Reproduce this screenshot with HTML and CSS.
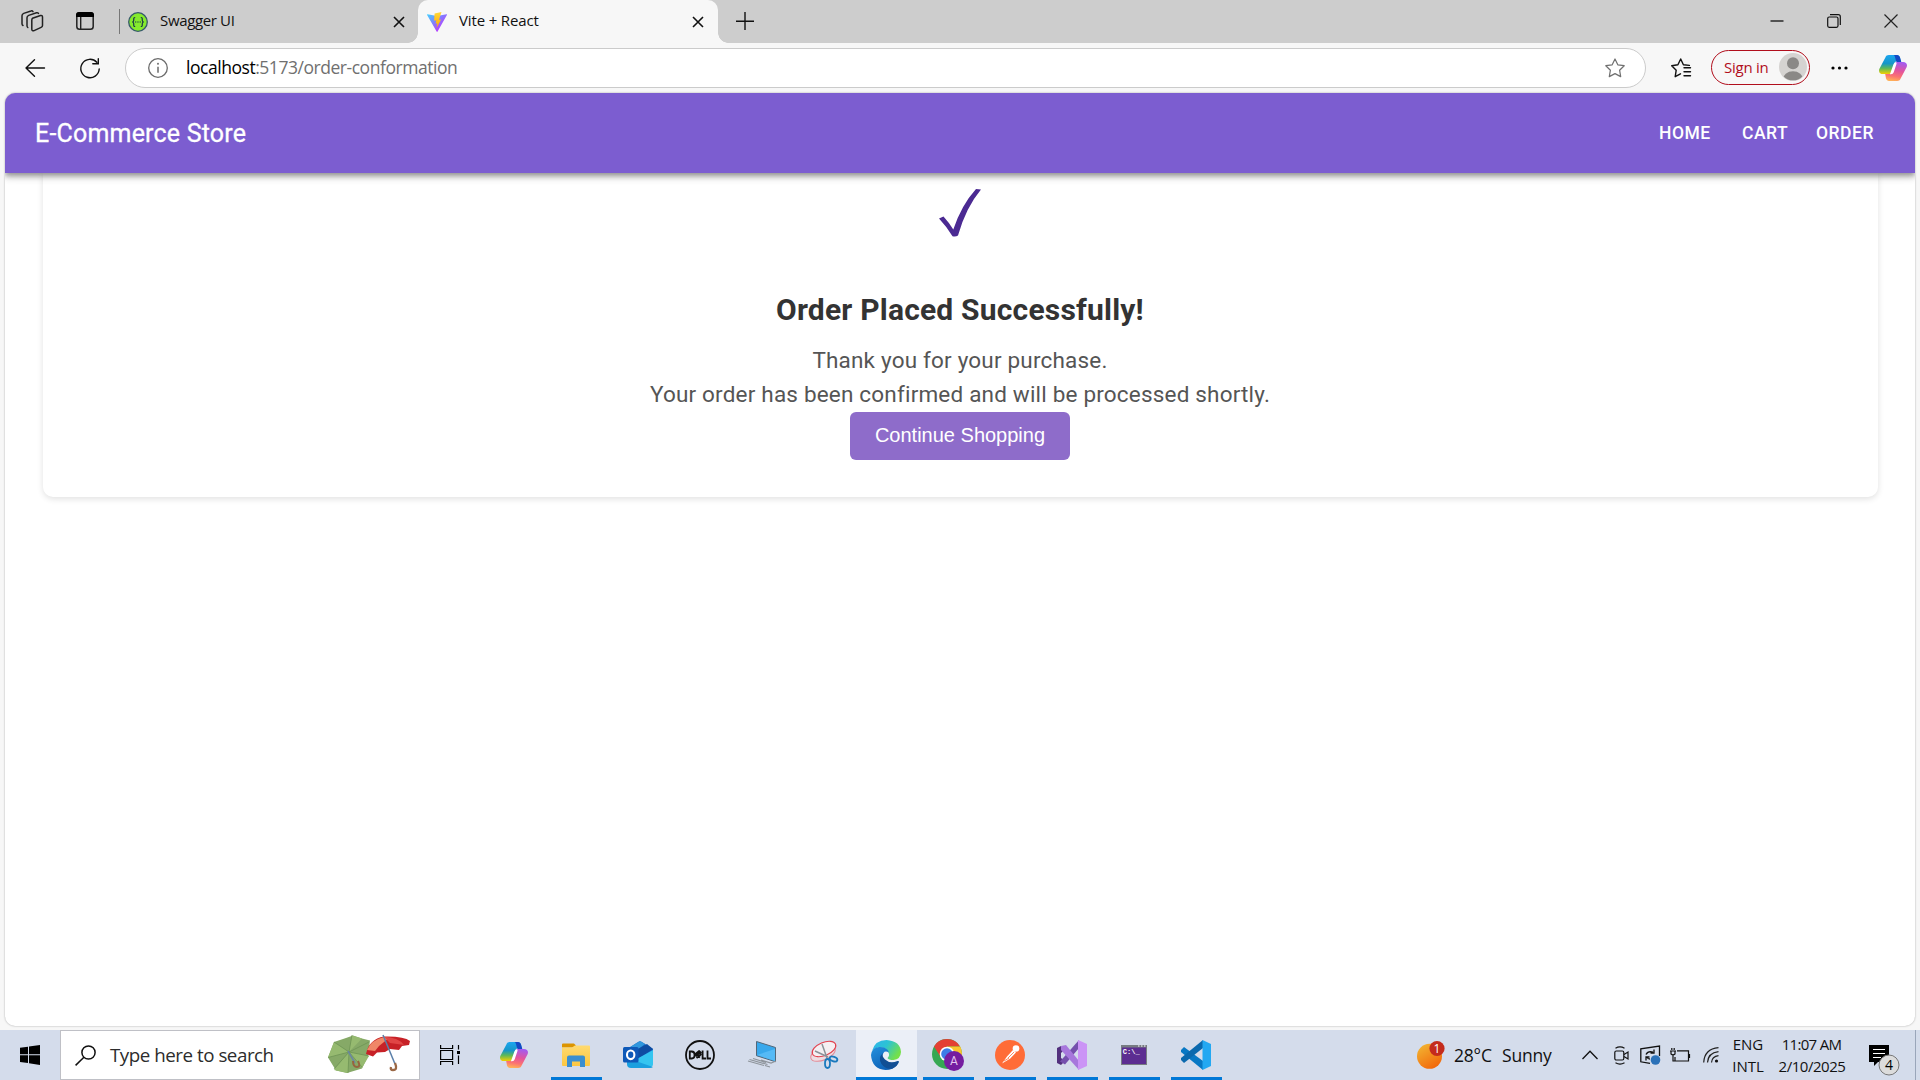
FILE: index.html
```html
<!DOCTYPE html>
<html lang="en">
<head>
<meta charset="utf-8">
<title>Vite + React</title>
<link rel="stylesheet" href="styles.css">
</head>
<body>
<svg class="defs" width="0" height="0">
  <defs>
    <linearGradient id="cpA" x1="0" y1="0" x2="0" y2="1"><stop offset="0" stop-color="#1ba6f0"/><stop offset=".45" stop-color="#1696c8"/><stop offset=".7" stop-color="#5cb85a"/><stop offset="1" stop-color="#f4d000"/></linearGradient>
    <linearGradient id="cpB" x1=".6" y1="0" x2=".4" y2="1"><stop offset="0" stop-color="#a35bf0"/><stop offset=".45" stop-color="#e3549d"/><stop offset=".75" stop-color="#fb7272"/><stop offset="1" stop-color="#ffb057"/></linearGradient>
    <linearGradient id="viteA" x1="0" y1="0" x2="1" y2="1"><stop offset="0" stop-color="#41d1ff"/><stop offset=".8" stop-color="#bd34fe"/></linearGradient>
    <linearGradient id="viteB" x1="0" y1="0" x2="0" y2="1"><stop offset="0" stop-color="#ffd83a"/><stop offset="1" stop-color="#ffa800"/></linearGradient>
    <linearGradient id="edgeA" x1="0" y1="0" x2="1" y2=".5"><stop offset="0" stop-color="#2fb3ee"/><stop offset=".5" stop-color="#2cc3d4"/><stop offset="1" stop-color="#74e04a"/></linearGradient>
    <linearGradient id="edgeB" x1="0" y1="0" x2=".6" y2="1"><stop offset="0" stop-color="#2390dd"/><stop offset="1" stop-color="#0c5fb5"/></linearGradient>
    <linearGradient id="sun" x1="0" y1="0" x2=".6" y2="1"><stop offset="0" stop-color="#f2bb35"/><stop offset="1" stop-color="#f26a0c"/></linearGradient>
    <linearGradient id="folder" x1="0" y1="0" x2="0" y2="1"><stop offset="0" stop-color="#ffda70"/><stop offset="1" stop-color="#fbc741"/></linearGradient>
    <symbol id="copilot" viewBox="0 0 28 26">
      <path d="M6.500 2.200C7 .7 8.200 0 9.800 0H18c1.500 0 2.500 1 3 2.500L21.800 6h-3c-2 0-3 1-3.500 2.600L12.500 17c-.5 1.400-1.500 2-3 2H4c-3 0-4.700-2-3.700-5z" fill="url(#cpA)"/>
      <path d="M14.500 0H18c1.500 0 2.500 1 3 2.500L22.300 7H18c-1.500 0-1.600-7-3.500-7z" fill="#1549c4"/>
      <path d="M21.500 23.800c-.5 1.500-1.700 2.200-3.300 2.200H10c-1.500 0-2.500-1-3-2.500L6.200 19h3.300c1.500 0 2.500-.6 3-2l3-8.500C16 7.500 17 7 18.500 7H24c3 0 4.700 2 3.700 5z" fill="url(#cpB)"/>
      <path d="M12.700 16.500l2.500-7C15.600 8.400 16.400 8 17.300 8h-.3l-3 9c-.3.900-1 1.500-2 1.500z" fill="#fff" stroke="#fff" stroke-width="1.500"/>
    </symbol>
    <symbol id="close" viewBox="0 0 12 12"><path d="M1 1l10 10M11 1L1 11" fill="none" stroke="#111" stroke-width="1.600"/></symbol>
  </defs>
</svg>

<header class="tabstrip">
  <svg class="ic-workspaces" width="23" height="23" viewBox="0 0 23 23" fill="none" stroke="#222" stroke-width="1.500" stroke-linejoin="round" stroke-linecap="round">
    <path d="M11.500 8.200l8-2.700c1-.3 2 .2 2 1.400v8.500c0 1-.5 1.600-1.400 2l-7 3.200c-1.200.5-2.300 0-2.300-1.300v-9c0-1 .3-1.700.7-2.100z"/>
    <path d="M6.800 17.500c-.6-.4-.8-1-.8-1.700V7.800c0-1.200.6-2 1.700-2.400L15.500 2.800c.9-.3 1.600 0 2 .6M2 15.500c-.7-.4-1-1-1-1.800V5.800c0-1.200.6-2 1.700-2.400L10 1c.8-.3 1.600 0 2 .6"/>
  </svg>
  <svg class="ic-tabs" width="18" height="18" viewBox="0 0 18 18"><rect x=".8" y=".8" width="16.400" height="16.400" rx="2.800" fill="none" stroke="#222" stroke-width="1.500"/><path d="M0 5V3Q0 0 3 0h12q3 0 3 3v2z"/><path d="M4.700 5v12" stroke="#222" stroke-width="1.400"/></svg>
  <div class="strip-divider"></div>
  <div class="tab tab-idle">
    <svg width="20" height="20" viewBox="0 0 20 20"><circle cx="10" cy="10" r="9.300" fill="#85ea2d" stroke="#35596b" stroke-width="1.300"/><path d="M7.200 5.500c-2 0-1.300 1.500-1.500 3C5.600 9.500 5 10 4.200 10c.8 0 1.400.5 1.500 1.500.2 1.500-.5 3 1.500 3M12.800 5.500c2 0 1.300 1.500 1.500 3 .1 1 .7 1.500 1.500 1.500-.8 0-1.400.5-1.500 1.500-.2 1.500.5 3-1.500 3" fill="none" stroke="#173647" stroke-width="1.200"/><path d="M7 10h1.300m1 0h1.300m1 0H13" stroke="#173647" stroke-width="1.200"/></svg>
    <span class="tab-title t-swagger">Swagger UI</span>
    <svg class="tab-close" width="12" height="12"><use href="#close"/></svg>
  </div>
  <div class="tab tab-active">
    <svg width="20" height="20" viewBox="0 0 20 20"><path d="M.5 2.300L10 4l9.500-1.700c.5 0 .7.300.4.800L10.600 19.500c-.3.500-.8.500-1 0L.1 3c-.2-.4 0-.7.400-.7z" fill="url(#viteA)"/><path d="M14.500.1L7.600 1.500l-.5 7.300 2.200-.5-.7 3.500 1.700-.5-.9 5 4.700-8.800-2.200.4L14.500.1z" fill="url(#viteB)"/></svg>
    <span class="tab-title t-vite">Vite + React</span>
    <svg class="tab-close" width="12" height="12"><use href="#close"/></svg>
  </div>
  <svg class="ic-plus" width="18" height="18"><path d="M9 0v18M0 9.200h18" stroke="#111" stroke-width="1.400"/></svg>
  <div class="window-buttons">
    <svg width="14" height="14"><path d="M.5 7h13" stroke="#000" stroke-width="1.200"/></svg>
    <svg width="14" height="14" fill="none" stroke="#111" stroke-width="1.200"><rect x=".7" y="3" width="10.300" height="10.300" rx="1.500"/><path d="M3 .7h8.300q2 0 2 2V11"/></svg>
    <svg width="14" height="14"><path d="M.5.500l13 13M13.500.500l-13 13" stroke="#222" stroke-width="1.200"/></svg>
  </div>
</header>

<div class="toolbar">
  <svg class="ic-back" width="20" height="18" fill="none" stroke="#111" stroke-width="1.400" stroke-linecap="round" stroke-linejoin="round"><path d="M9.500.7L1 9l8.500 8.300M1 9h18.500"/></svg>
  <svg class="ic-reload" width="20" height="21" viewBox="0 0 20 21" fill="none" stroke="#111" stroke-width="1.400" stroke-linecap="round"><path d="M16.800 4.300A9.200 9.200 0 1 0 19.200 11M18.300.7v5h-5.500"/></svg>
  <div class="address">
    <svg width="20" height="20" fill="none" stroke="#6b6b6b" stroke-width="1.300"><circle cx="10" cy="10" r="9.300"/><path d="M10 8.700v6" stroke-width="1.500"/><circle cx="10" cy="5.800" r=".4"/></svg>
    <span class="url"><b>localhost</b>:5173/order-conformation</span>
    <svg class="ic-star" width="20" height="20" viewBox="0 0 20 20" fill="none" stroke="#707070" stroke-width="1.200" stroke-linejoin="round"><path d="M10 1l2.800 5.800 6.400.9-4.600 4.500 1.100 6.400L10 15.600l-5.700 3 1.100-6.400L.8 7.700l6.400-.9z"/></svg>
  </div>
  <svg class="ic-favorites" width="20" height="20" viewBox="0 0 20 20" fill="none" stroke="#111" stroke-width="1.400" stroke-linejoin="round" stroke-linecap="round"><path d="M9.500 15.800l-5.300 2.900 1-6.500L.7 7.800l6.200-1L9.700 1l2.700 5.700 6 .7M13 9.800h6.500M13 13.800h6.500M13 17.800h6.500" /></svg>
  <div class="signin"><span>Sign in</span>
    <svg width="28" height="28" viewBox="0 0 28 28"><clipPath id="av"><circle cx="14" cy="14" r="13.300"/></clipPath><circle cx="14" cy="14" r="14" fill="#d5d3d1"/><circle cx="14" cy="10.300" r="6" fill="#8a8886"/><ellipse cx="14" cy="26.500" rx="10.200" ry="8.300" fill="#8a8886" clip-path="url(#av)"/></svg>
  </div>
  <svg class="ic-more" width="17" height="4"><circle cx="2" cy="2" r="1.600"/><circle cx="8.500" cy="2" r="1.600"/><circle cx="15" cy="2" r="1.600"/></svg>
  <svg class="ic-copilot" width="28" height="26"><use href="#copilot"/></svg>
</div>

<div class="viewport">
  <div class="page">
    <nav class="navbar">
      <span class="brand">E-Commerce Store</span>
      <span class="link l-home">HOME</span><span class="link l-cart">CART</span><span class="link l-order">ORDER</span>
    </nav>
    <main class="content">
      <section class="card">
        <svg class="check" width="42" height="48" viewBox="0 0 42 48"><path d="M0 29.500l4.500-2q5.500 6 9.800 13Q22.500 16 37 0l5 .6Q27 18.500 19 46.500q-2 1.500-5.500.8Q8 38 0 29.500z" fill="#4b2a92"/></svg>
        <h1>Order Placed Successfully!</h1>
        <p>Thank you for your purchase.<br>Your order has been confirmed and will be processed shortly.</p>
        <button class="continue">Continue Shopping</button>
      </section>
    </main>
  </div>
</div>

<footer class="taskbar">
  <div class="start"><svg width="20" height="20" viewBox="0 0 20 20"><path d="M0 2.800L8 1.700v7.600H0zM9 1.500L20 0v9.300H9zM0 10.300h8V18l-8-1.100zM9 10.300h11V20L9 18.200z"/></svg></div>
  <div class="search">
    <svg width="21" height="21" fill="none" stroke="#111" stroke-width="1.500"><circle cx="13.500" cy="7.500" r="6.600"/><path d="M8.900 12.200L.6 20.400"/></svg>
    <span class="search-text">Type here to search</span>
    <svg class="umbrellas" width="82" height="40" viewBox="0 0 82 40">
      <path d="M0 22.500L6 7 18 3l7-2.500 9 3 8 2-2 15-6 13-15 4.500-11-2.500z" fill="#86a967"/>
      <path d="M21 17L0 22.500 6 7zM21 17L24 .5 34 3.500zM21 17l20 4-7 12zM21 17L6 35l14 3z" fill="#96ba70"/>
      <path d="M21 17L0 22.500M21 17L6 7M21 17L24 0M21 17L41 7M21 17l20 4M21 17l13 15M21 17l-1 21M21 17L6 34" stroke="#6a9152" stroke-width=".7"/>
      <path d="M20 16l7 12" stroke="#6a86a2" stroke-width="1.500"/><path d="M25 26q0 6 4 6t1-6" fill="none" stroke="#96643f" stroke-width="2"/>
      <path d="M38 19Q41 4 56 1.500 76 1 82 6l-1 4-7 1-3 4-9-1-5 3-8 .500-4 4z" fill="#c72127"/>
      <path d="M39 15Q43 5 56 2l5 1-10 8-4 5z" fill="#f08768"/><path d="M56 2Q70 2 76 10L62 8z" fill="#e04545"/>
      <path d="M55 0l12 29" stroke="#5a7fa9" stroke-width="1.500"/><path d="M67 28q3 7-2 7-3 0-2-3" fill="none" stroke="#9b6845" stroke-width="2.300"/>
    </svg>
  </div>
  <div class="cell taskview"><svg width="20" height="20" fill="none" stroke="#000" stroke-width="1.200"><path d="M.6 0v3.500h12V0M.6 20v-3.500h12V20M.6 5.500h12v9H.6zM18.500 0v4.500M18.500 10.500V19"/><path d="M17 6h3v3h-3z" fill="#000" stroke="none"/></svg></div>
  <div class="cell"><svg width="28" height="26"><use href="#copilot"/></svg></div>
  <div class="cell open"><svg width="28" height="24" viewBox="0 0 28 24"><path d="M0 1.500Q0 .500 1 .500h11l2 2-2 2H0z" fill="#dc9400"/><path d="M0 4.500h10l3-2h14q1 0 1 1V22q0 1-1 1H1q-1 0-1-1z" fill="url(#folder)"/><path d="M5 24V14.500q0-2 2-2h14q2 0 2 2V24h-5v-5.500h-8V24z" fill="#3a8fd0"/></svg></div>
  <div class="cell"><svg width="30" height="28" viewBox="0 0 30 28"><path d="M4 8L15.500.700Q17 0 18.500.800L30 8v14H4z" fill="#1668c5"/><path d="M4 8L17 0l5 3L9 13z" fill="#3097dd"/><path d="M13 9L24 3l6 5-15 10z" fill="#0f4da2"/><path d="M12 19l18-10v14q0 3-3 3H8z" fill="#34c5f0"/><path d="M4 17l26 9q-1 1-3 1H8q-4 0-4-4z" fill="#1aa0df"/><rect y="6" width="15.500" height="15.500" rx="1.500" fill="#0e59b8"/><ellipse cx="7.700" cy="13.800" rx="3.700" ry="4.300" fill="none" stroke="#fff" stroke-width="2.100"/></svg></div>
  <div class="cell"><svg width="30" height="30" viewBox="0 0 30 30"><circle cx="15" cy="15" r="14" fill="none" stroke="#111" stroke-width="1.800"/><g fill="none" stroke="#111" stroke-width="1.800"><path d="M4.800 11.500h2q2.800 0 2.800 3.500t-2.800 3.500h-2z"/><path d="M9.500 14.800l5-4M10.500 16.300l5-4M11.500 18l5-4M14 11l2.500 2.500M11 14l4 3.500"/><path d="M17.600 10.500v8H21M22.500 10.500v8H26"/></g></svg></div>
  <div class="cell"><svg width="28" height="28" viewBox="0 0 28 28"><path d="M8.500.5l19 6v14.200l-19-6z" fill="#38a8ec" stroke="#526779"/><path d="M9 14l18-6v12z" fill="#55baf6"/><path d="M13 19l10 3 5-2M0 20l16 4.500M1.500 18.500l18 5M5 17.500l13 4M17 24.500l5 1.500" fill="none" stroke="#8e949b" stroke-width="1.200"/></svg></div>
  <div class="cell"><svg width="28" height="28" viewBox="0 0 28 28"><ellipse cx="13" cy="12.500" rx="13" ry="6.500" transform="rotate(-23 13 12.500)" fill="#eddce2" stroke="#e48b96" stroke-width="1"/><ellipse cx="14" cy="8" rx="12.500" ry="6.500" transform="rotate(-23 14 8)" fill="#f5eff2" stroke="#e24350" stroke-width="1.200"/><path d="M12 3l5 14M5 10l13 6" stroke="#8b9299" stroke-width="1.500"/><ellipse cx="17.500" cy="22.500" rx="2.500" ry="4.500" fill="none" stroke="#1979bd" stroke-width="1.800"/><ellipse cx="23.500" cy="18" rx="4" ry="2.300" transform="rotate(20 23.500 18)" fill="none" stroke="#1979bd" stroke-width="1.800"/></svg></div>
  <div class="cell open focused"><svg width="30" height="30" viewBox="0 0 30 30"><path d="M1 11Q4 0 15.500 0 29.500 1 30 12q-.5 7.500-7.500 8-5 0-6-2 2.500-2.500 1-5.500Q14 6 7 7.500 3 8.500 1 11z" fill="url(#edgeA)"/><path d="M0 15Q1 7.500 8 7q8-.5 10 5.500-4-2-5.500.5-3 4 0 9 5 5 14 2.500Q22 30 14.500 30 1 29 0 15z" fill="url(#edgeB)"/><path d="M12 13q-5.500 5-1.500 11 4.500 6 11 4.500 4.500-2 6.500-6.500 0-1.500-1.500-1-7.500 3-12.500-1.500-3.500-3.500-2-6.500z" fill="#114f94"/></svg></div>
  <div class="cell open"><svg width="32" height="32" viewBox="0 0 32 32"><circle cx="15" cy="15" r="15" fill="#35a853"/><path d="M2 7.500Q6 0 15 0t13 7.500H15L8 17z" fill="#e43f33"/><path d="M15 7.500h13.300Q30 11 30 15q0 14-14 15l6-11z" fill="#fbc52d"/><circle cx="15" cy="15" r="7.300" fill="#fff"/><circle cx="15" cy="15" r="5.800" fill="#3c7de8"/><circle cx="22" cy="22" r="10" fill="#751da0"/><text x="22" y="26" text-anchor="middle" class="profile-letter">A</text></svg></div>
  <div class="cell open"><svg width="30" height="30" viewBox="0 0 30 30"><circle cx="15" cy="15" r="15" fill="#ff6c37"/><circle cx="21" cy="8.500" r="3.300" fill="#fff"/><path d="M18 10l3 2.500-6 6.300-8 4.700 5-7z" fill="#fff"/><path d="M13 18l6-6M9 21l5-3" stroke="#ff6c37" stroke-width=".8"/></svg></div>
  <div class="cell open"><svg width="30" height="30" viewBox="0 0 30 30"><path d="M0 8l4-2 4 3-4 4v5l4 3-4 4-4-2z" fill="#52307d"/><path d="M3 21.500l5 3L22 8V0z" fill="#7550ad"/><path d="M4 6l5-1 13 16v9L4 10z" fill="#a777dc"/><path d="M21 0l9 4v22l-9 4z" fill="#cb94f6"/></svg></div>
  <div class="cell open"><svg width="26" height="20" viewBox="0 0 26 20"><rect width="26" height="20" fill="#777c82"/><path d="M1 2.500h24V19H1z" fill="#5c2d91"/><path d="M17 1h1.500m1.500 0h1.500m1.500 0h1.500" stroke="#fff"/><text x="1.800" y="9" class="prompt">C:\_</text></svg></div>
  <div class="cell open"><svg width="30" height="30" viewBox="0 0 30 30"><path d="M0 10l3-3 19 14v9L0 12z" fill="#0878c4"/><path d="M0 20l3 3L22 8V0L0 18z" fill="#0a69ae"/><path d="M21.500 0L30 4v22l-8.500 4z" fill="#23a8f2"/></svg></div>

  <div class="weather">
    <svg width="28" height="28" viewBox="0 0 28 28"><circle cx="12.500" cy="15.300" r="12.500" fill="url(#sun)"/><circle cx="20" cy="7.500" r="7.600" fill="#c42b1c"/><text x="20" y="12" text-anchor="middle" class="weather-count">1</text></svg>
    <span class="temp">28°C</span><span class="sky">Sunny</span>
  </div>
  <div class="tray">
    <svg class="ic-chevron" width="16" height="10" fill="none" stroke="#111" stroke-width="1.300"><path d="M.5 9L8 1.200 15.500 9"/></svg>
    <svg class="ic-cam" width="15" height="19" viewBox="0 0 15 19" fill="none" stroke="#111" stroke-width="1.200"><rect x=".8" y="5" width="9" height="9" rx="1.500"/><path d="M10 8.500l4-2.500v7l-4-2.500M1.500 2.200Q6-.500 10.500 2.200M1.500 16.800q4.500 2.500 9 0"/></svg>
    <svg class="ic-sync" width="21" height="20" viewBox="0 0 21 20" fill="none" stroke="#111" stroke-width="1.300"><path d="M19.500 11V1L.800 3.800v13L10 18.300"/><path d="M6 9.500q2-4 7-2.500M14 4.500V8h-3.500M10 14q-2 0-3-1.500M6 15.500V12h3.500"/><circle cx="15.500" cy="15" r="4.800" fill="#2b71b8" stroke="none"/></svg>
    <svg class="ic-battery" width="21" height="14" viewBox="0 0 21 14" fill="none" stroke="#111" stroke-width="1.200"><path d="M7 2.800h11.500V13H5V9M19.500 6v4M1 2.500v3.500q2 1.500 4 0V2.500M1.800 0v2M4.200 0v2M3 7v6h2M0 3h6"/></svg>
    <svg class="ic-wifi" width="16" height="16" viewBox="0 0 16 16" fill="none" stroke="#222" stroke-width="1.200"><path d="M.7 15.500Q1.500 2 15.500.700M4.500 15.500Q5 6 15.500 4.700M8.500 15.500Q9 9.500 15.500 8.700"/><circle cx="13.500" cy="14" r="1.600" fill="#111" stroke="none"/></svg>
    <div class="two-line lang"><span class="s-eng">ENG</span><span class="s-intl">INTL</span></div>
    <div class="two-line clock"><span class="s-time">11:07 AM</span><span class="s-date">2/10/2025</span></div>
    <svg class="ic-notify" width="31" height="31" viewBox="0 0 31 31"><path d="M0 0h20v17H9l-4 4v-4H0z"/><path d="M4 4.500h12M4 8.500h12M4 12.500h8" stroke="#fff" stroke-width="1.200"/><circle cx="20" cy="20" r="10" fill="#dcdcdc" stroke="#777"/><text x="20" y="25" text-anchor="middle" class="notify-count">4</text></svg>
  </div>
  <div class="peek"></div>
</footer>
</body>
</html>
```
FILE: styles.css
```css
* { box-sizing: border-box; }
html, body { margin: 0; width: 1920px; height: 1080px; overflow: hidden; }
body { display: flex; flex-direction: column; background: #f7f7f7; color: #111; font-family: "Open Sans", "Noto Sans", sans-serif; }
svg { display: block; flex: none; overflow: visible; }
.defs { height: 0; }
span { white-space: nowrap; }

/* Tab strip */
.tabstrip { display: flex; align-items: center; flex: none; height: 43px; background: #cdcdcd; }
.ic-workspaces { margin-left: 21px; }
.ic-tabs { margin-left: 32px; margin-top: -1px; }
.strip-divider { width: 1px; height: 25px; margin-left: 25px; background: #777; }
.tab { display: flex; align-items: center; height: 43px; }
.tab-idle { width: 298px; padding: 0 13px 0 8px; }
.tab-active { width: 300px; padding: 0 14px 0 9px; background: #f7f7f7; border-radius: 10px 10px 0 0; position: relative; }
.tab-active::before, .tab-active::after { content: ""; position: absolute; bottom: 0; width: 10px; height: 10px; }
.tab-active::before { left: -10px; background: radial-gradient(circle at 0 0, #cdcdcd 9.5px, #f7f7f7 10px); }
.tab-active::after { right: -10px; background: radial-gradient(circle at 100% 0, #cdcdcd 9.5px, #f7f7f7 10px); }
.tab-title { margin-left: 12px; margin-top: -3px; font-size: 15px; letter-spacing: -.15px; }
.t-swagger { letter-spacing: -.35px; }
.tab-close { margin-left: auto; }
.ic-plus { margin-left: 18px; margin-top: -1px; }
.window-buttons { display: flex; gap: 43px; margin: -1px 0 0 auto; padding-right: 22px; }

/* Toolbar */
.toolbar { display: flex; align-items: center; flex: none; height: 50px; }
.ic-back { margin-left: 25px; }
.ic-reload { margin-left: 35px; }
.address { display: flex; align-items: center; width: 1521px; height: 40px; margin-left: 25px; padding: 0 20px 0 22px; background: #fff; border: 1px solid #cbcbcb; border-radius: 20px; }
.url { margin-left: 18px; margin-top: -2px; font-size: 17.5px; letter-spacing: -.46px; color: #707070; }
.url b { font-weight: 400; color: #000; }
.ic-star { margin-left: auto; }
.ic-favorites { margin-left: 25px; }
.signin { display: flex; align-items: center; width: 99px; height: 35px; margin: -2px 0 0 20px; padding: 0 2px 0 12px; border: 1.500px solid #b10e1c; border-radius: 18px; color: #b10e1c; font-size: 15px; letter-spacing: -.25px; justify-content: space-between; }
.ic-more { margin-left: 21px; }
.ic-copilot { margin-left: 31px; }

/* Page */
.viewport { flex: 1; padding: 0 5px 4px; min-height: 0; }
.page { height: 933px; overflow: hidden; background: #fff; border-radius: 10px; box-shadow: 0 0 2px rgba(0, 0, 0, .35); font-family: Roboto, "Liberation Sans", sans-serif; }
.navbar { display: flex; align-items: center; height: 80px; padding-left: 30px; background: #7c5dd0; color: #fff; position: relative; box-shadow: 0 2px 5px rgba(0, 0, 0, .3), 0 5px 6px rgba(0, 0, 0, .14), 0 1px 12px rgba(0, 0, 0, .12); }
.brand { font-size: 25px; font-weight: 400; letter-spacing: .19px; margin-right: auto; -webkit-text-stroke: .3px #fff; }
.link { font-size: 17.5px; font-weight: 500; letter-spacing: .5px; }
.l-home { width: 83px; }
.l-cart { width: 74px; }
.l-order { width: 99px; }
.content { padding: 0 37px 0 38px; }
.card { display: flex; flex-direction: column; align-items: center; height: 324px; padding: 16px 1px 0 0; background: #fff; border-radius: 0 0 10px 10px; box-shadow: 0 2px 6px rgba(0, 0, 0, .12); }
h1 { margin: 53px 0 0; font-size: 30px; line-height: 40px; font-weight: 700; letter-spacing: .2px; color: #333; }
p { margin: 13px 0 0; font-size: 22.5px; line-height: 34px; letter-spacing: .19px; text-align: center; color: #555; }
.continue { width: 220px; height: 48px; margin-top: 1px; padding: 0 0 2px; border: 0; border-radius: 6px; background: #8e6cca; color: #fff; font: 20px "Liberation Sans", Arial, sans-serif; }

/* Taskbar */
.taskbar { display: flex; flex: none; height: 50px; background: #d4dceb; }
.start { display: grid; place-items: center; width: 60px; }
.search { display: flex; align-items: center; width: 360px; padding: 0 9px 0 14px; background: #fff; border: 1px solid #bfc0c6; }
.search-text { margin-left: 14px; margin-top: -1px; font-size: 18.75px; letter-spacing: -.47px; color: #2c2c2c; }
.umbrellas { margin-left: auto; }
.cell { display: grid; place-items: center; width: 62px; padding-right: 2px; position: relative; }
.taskview { width: 64px; padding-right: 4px; }
.open::after { content: ""; position: absolute; left: 5px; right: 6px; bottom: 0; height: 3px; background: #0078d7; }
.focused { background: linear-gradient(to right, #ebeff7 61px, #d4dceb 61px); }
.focused::after { left: 0; right: 1px; }
.profile-letter { font: 12px Roboto, sans-serif; fill: #e5c8f0; }
.prompt { font: bold 7px "Liberation Mono", monospace; fill: #fff; }
.weather { display: flex; align-items: center; margin-left: 189px; width: 165px; font-size: 17.5px; letter-spacing: -.2px; }
.temp { margin-left: 9px; width: 48px; }
.weather-count { font: 12px "Open Sans", sans-serif; letter-spacing: 0; fill: #fff; }
.tray { display: flex; align-items: center; }
.ic-cam { margin-left: 16px; }
.ic-sync { margin-left: 11px; }
.ic-battery { margin-left: 9px; }
.ic-wifi { margin-left: 12px; }
.two-line { display: flex; flex-direction: column; align-items: center; font-size: 15px; line-height: 22px; }
.lang { width: 32px; margin-left: 13px; }
.clock { width: 72px; margin-left: 12px; margin-top: -1px; }
.s-time { letter-spacing: -.7px; margin-right: 1px; }
.s-date { letter-spacing: -.45px; }
.ic-notify { margin-left: 21px; margin-top: 10px; }
.notify-count { font: 14px "Open Sans", sans-serif; }
.peek { margin-left: auto; width: 5px; border-left: 1px solid #9aa6ba; }
```
